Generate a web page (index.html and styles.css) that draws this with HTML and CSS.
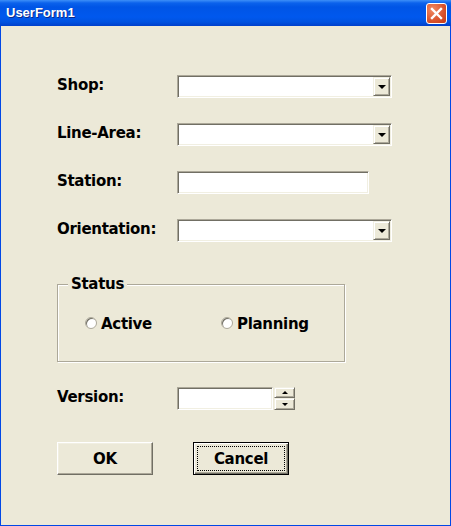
FILE: index.html
```html
<!DOCTYPE html>
<html>
<head>
<meta charset="utf-8">
<title>UserForm1</title>
<link rel="stylesheet" href="styles.css">
</head>
<body>
<div class="window">
  <div class="titlebar">
    <span class="title">UserForm1</span>
    <span class="close">
      <svg width="13" height="13" viewBox="0 0 13 13"><path d="M2 2 L11 11 M11 2 L2 11" stroke="#fff" stroke-width="2.4" stroke-linecap="square"/></svg>
    </span>
  </div>
  <div class="form">
    <div class="rows">
      <label class="lbl">Shop:</label>
      <div class="combo"><span class="ddbtn"><span class="arrow-down"></span></span></div>
      <label class="lbl">Line-Area:</label>
      <div class="combo"><span class="ddbtn"><span class="arrow-down"></span></span></div>
      <label class="lbl">Station:</label>
      <div class="textbox station"></div>
      <label class="lbl">Orientation:</label>
      <div class="combo"><span class="ddbtn"><span class="arrow-down"></span></span></div>
    </div>

    <div class="frame">
      <span class="legend">Status</span>
      <div class="radios">
        <div class="radio-item"><span class="radio"></span><span class="rlabel">Active</span></div>
        <div class="radio-item"><span class="radio"></span><span class="rlabel">Planning</span></div>
      </div>
    </div>

    <div class="rows version-row">
      <label class="lbl">Version:</label>
      <div class="spin">
        <div class="textbox version"></div>
        <div class="spinbtns">
          <span class="sbtn up"><span class="arrow-up"></span></span>
          <span class="sbtn down"><span class="arrow-down"></span></span>
        </div>
      </div>
    </div>

    <div class="buttons">
      <div class="btn">OK</div>
      <div class="btn default"><span class="focus">Cancel</span></div>
    </div>
  </div>
</div>
</body>
</html>
```
FILE: styles.css
```css
html, body {
  margin: 0;
  padding: 0;
  background: #ece9d8;
}
.window {
  width: 451px;
  height: 526px;
  box-sizing: border-box;
  border: 1px solid #0148e6;
  border-top: none;
  background: #ece9d8;
  display: flex;
  flex-direction: column;
}
.titlebar {
  height: 26px;
  margin: 0 -1px;
  flex: none;
  display: flex;
  align-items: center;
  justify-content: space-between;
  padding: 0 4px 0 6px;
  background: linear-gradient(#3d8ff8 0, #0b62ec 3px, #0055e6 7px, #0058ee 17px, #0052e0 22px, #0040cb 26px);
}
.title {
  font-family: "Liberation Sans", Arial, sans-serif;
  font-weight: bold;
  font-size: 13px;
  color: #fff;
  text-shadow: 1px 1px 0 #0a2a8a;
  margin-top: -1px;
}
.close {
  width: 19px;
  height: 19px;
  border: 1px solid #fff;
  border-radius: 3px;
  background: radial-gradient(circle at 30% 30%, #f08a64, #d9532c 60%, #c43a17);
  display: flex;
  align-items: center;
  justify-content: center;
  margin-top: 1px;
}
.close svg { display: block; }

.form {
  padding: 49px 0 0 56px;
  font-family: "DejaVu Sans", Verdana, sans-serif;
  font-weight: bold;
  font-size: 15px;
  letter-spacing: -0.3px;
  color: #000;
}
.rows {
  display: grid;
  grid-template-columns: 120px auto;
  row-gap: 25px;
  align-items: center;
  justify-items: start;
}
.lbl {
  line-height: 18px;
  margin-top: -3px;
}

/* sunken 3D field */
.combo, .textbox {
  box-sizing: border-box;
  height: 23px;
  background: #fff;
  border: 1px solid;
  border-color: #aca899 #fff #fff #aca899;
  box-shadow: inset 1px 1px 0 #716f64, inset -1px -1px 0 #f1efe2;
  display: flex;
  justify-content: flex-end;
  padding: 1px;
}
.combo { width: 215px; }
.station { width: 192px; }

.ddbtn, .sbtn {
  box-sizing: border-box;
  width: 17px;
  height: 19px;
  background: #ece9d8;
  border: 1px solid;
  border-color: #f1efe2 #716f64 #716f64 #f1efe2;
  box-shadow: inset 1px 1px 0 #fff, inset -1px -1px 0 #aca899;
  display: flex;
  align-items: center;
  justify-content: center;
}
.arrow-down {
  width: 0;
  height: 0;
  border-left: 4px solid transparent;
  border-right: 4px solid transparent;
  border-top: 4px solid #000;
}
.arrow-up {
  width: 0;
  height: 0;
  border-left: 4px solid transparent;
  border-right: 4px solid transparent;
  border-bottom: 4px solid #000;
}

/* frame */
.frame {
  position: relative;
  box-sizing: border-box;
  width: 288px;
  height: 78px;
  margin-top: 42px;
  border: 1px solid #aca899;
  box-shadow: 1px 1px 0 #fff, inset 1px 1px 0 #fff;
  padding: 30px 0 0 27px;
}
.legend {
  position: absolute;
  top: -10px;
  left: 10px;
  padding: 0 3px;
  line-height: 18px;
  background: #ece9d8;
}
.radios {
  display: flex;
}
.radio-item {
  display: flex;
  align-items: center;
  gap: 4px;
  line-height: 18px;
}
.radio-item:first-child { width: 136px; }
.radio {
  box-sizing: border-box;
  width: 12px;
  height: 12px;
  border-radius: 50%;
  background: #fff;
  border: 1px solid #aca899;
  box-shadow: inset 1px 1px 0 #716f64;
  margin-top: -2px;
}

/* version */
.version-row {
  margin-top: 25px;
}
.spin {
  display: flex;
  gap: 1px;
}
.version { width: 96px; }
.spinbtns {
  display: flex;
  flex-direction: column;
  width: 21px;
  height: 23px;
}
.sbtn { width: 21px; }
.sbtn.up { height: 11px; }
.sbtn.down { height: 12px; }
.sbtn .arrow-up, .sbtn .arrow-down {
  border-left-width: 3.5px;
  border-right-width: 3.5px;
  border-top-width: 3.5px;
  border-bottom-width: 3.5px;
}
.sbtn .arrow-up { border-top: none; }
.sbtn .arrow-down { border-bottom: none; }

/* buttons */
.buttons {
  display: flex;
  gap: 40px;
  margin-top: 32px;
}
.btn {
  box-sizing: border-box;
  width: 96px;
  height: 33px;
  background: #ece9d8;
  border: 1px solid;
  border-color: #fff #716f64 #716f64 #fff;
  box-shadow: inset -1px -1px 0 #aca899, inset 1px 1px 0 #f1efe2;
  display: flex;
  align-items: center;
  justify-content: center;
}
.btn.default {
  border: 1px solid #000;
  box-shadow: inset 1px 1px 0 #fff, inset -1px -1px 0 #716f64, inset -2px -2px 0 #aca899;
  padding: 3px;
}
.focus {
  flex: 1;
  align-self: stretch;
  display: flex;
  align-items: center;
  justify-content: center;
  outline: 1px dotted #000;
  outline-offset: -1px;
}
```
